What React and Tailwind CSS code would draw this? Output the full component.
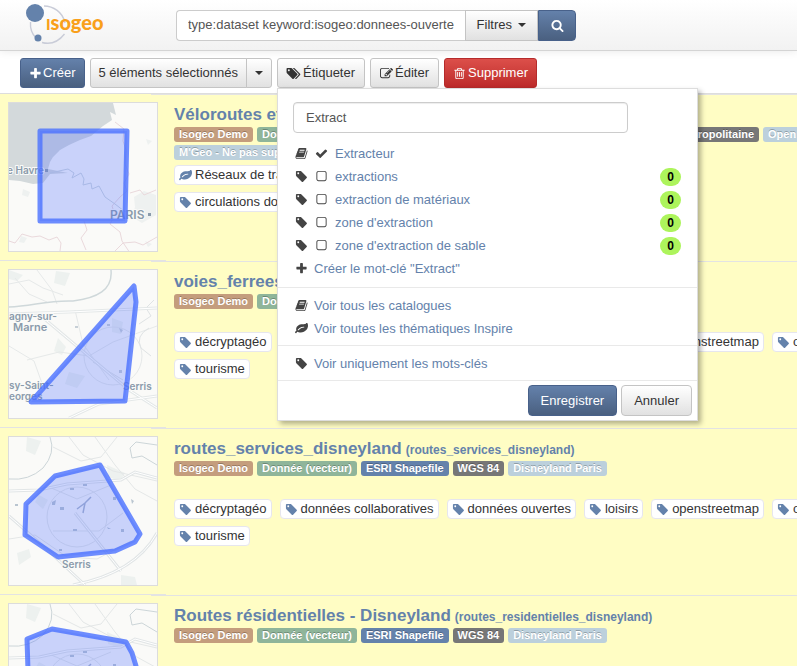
import React from "react";

const ICONS = {
  tag: "M576 448q0-53-37.5-90.5t-90.5-37.5-90.5 37.5-37.5 90.5 37.5 90.5 90.5 37.5 90.5-37.5 37.5-90.5zm1067 576q0 53-37 90l-491 492q-39 37-91 37-53 0-90-37l-715-716q-38-37-64.5-101t-26.5-117v-416q0-52 38-90t90-38h416q53 0 117 26.5t102 64.5l715 714q37 39 37 91z",
  tags: "M384 448q0-53-37.5-90.5t-90.5-37.5-90.5 37.5-37.5 90.5 37.5 90.5 90.5 37.5 90.5-37.5 37.5-90.5zm1067 576q0 53-37 90l-491 492q-39 37-91 37-53 0-90-37l-715-716q-38-37-64.5-101t-26.5-117v-416q0-52 38-90t90-38h416q53 0 117 26.5t102 64.5l715 714q37 39 37 91zm384 0q0 53-37 90l-491 492q-39 37-91 37-36 0-59-14t-53-45l470-470q37-37 37-90 0-52-37-91l-715-714q-38-38-102-64.5t-117-26.5h224q53 0 117 26.5t102 64.5l715 714q37 39 37 91z",
  plus: "M1600 736v192q0 40-28 68t-68 28h-416v416q0 40-28 68t-68 28h-192q-40 0-68-28t-28-68v-416h-416q-40 0-68-28t-28-68v-192q0-40 28-68t68-28h416v-416q0-40 28-68t68-28h192q40 0 68 28t28 68v416h416q40 0 68 28t28 68z",
  search: "M1216 832q0-185-131.5-316.5t-316.5-131.5-316.5 131.5-131.5 316.5 131.5 316.5 316.5 131.5 316.5-131.5 131.5-316.5zm512 832q0 52-38 90t-90 38q-54 0-90-38l-343-342q-179 124-399 124-143 0-273.5-55.5t-225-150-150-225-55.5-273.5 55.5-273.5 150-225 225-150 273.5-55.5 273.5 55.5 225 150 150 225 55.5 273.5q0 220-124 399l343 343q37 37 37 90z",
  check: "M1671 566q0 40-28 68l-724 724-136 136q-28 28-68 28t-68-28l-136-136-362-362q-28-28-28-68t28-68l136-136q28-28 68-28t68 28l294 295 656-657q28-28 68-28t68 28l136 136q28 28 28 68z",
  square: "M1312 256h-832q-66 0-113 47t-47 113v832q0 66 47 113t113 47h832q66 0 113-47t47-113v-832q0-66-47-113t-113-47zm288 160v832q0 119-84.5 203.5t-203.5 84.5h-832q-119 0-203.5-84.5t-84.5-203.5v-832q0-119 84.5-203.5t203.5-84.5h832q119 0 203.5 84.5t84.5 203.5z",
  leaf: "M1280 704q0-26-19-45t-45-19q-172 0-318 49.5t-259.5 134-235.5 219.5q-19 21-19 45 0 26 19 45t45 19q24 0 45-19 27-24 74-71t67-66q137-124 268.5-176t313.5-52q26 0 45-19t19-45zm512-198q0 95-20 193-46 224-184.5 383t-357.5 268q-214 108-438 108-148 0-286-47-15-5-88-42t-96-37q-16 0-39.5 32t-45 70-52.5 70-60 32q-43 0-63.5-17.5t-45.5-59.5q-2-4-6-11t-5.5-10-3-9.5-1.5-13.5q0-35 31-73.5t68-65.5 68-56 31-48q0-4-14-38t-16-44q-9-51-9-104 0-115 43.5-220t119-184.5 170.5-139 204-95.5q55-18 145-25.5t179.5-9 178.5-6 163.5-24 113.5-56.5l29.5-29.5 29.5-28 27-20 36.5-16 43.5-4.5q39 0 70.5 46t47.5 112 24 124 8 96z",
  book: "M1703 478q40 57 18 129l-275 906q-19 64-76.5 107.5t-122.5 43.5h-923q-77 0-148.5-53.5t-99.5-131.5q-24-67-2-127 0-4 3-27t4-37q1-8-3-21.5t-3-19.5q2-11 8-21t16.5-23.5 16.5-23.5q23-38 45-91.5t30-91.5q3-10 .5-30t-.5-28q3-11 17-28t17-23q21-36 42-92t25-90q1-9-2.500-32t.5-28q4-13 22-30.5t22-22.5q19-26 42.5-84.5t27.5-96.5q1-8-3-25.5t-2-26.5q2-8 9-18t18-23 17-21q8-12 16.500-30.500t15-35 16-36 19.500-32 26.500-23.500 36-11.500 47.500 5.500l-1 3q38-9 51-9h761q74 0 114 56t18 130l-274 906q-36 119-71.500 153.500t-128.500 34.500h-869q-27 0-38 15-11 16-1 43 24 70 144 70h923q29 0 56-15.500t35-41.500l300-987q7-22 5-57 38 15 59 43zm-1064 2q-4 13 2 22.500t20 9.500h608q13 0 25.500-9.500t16.500-22.500l21-64q4-13-2-22.500t-20-9.500h-608q-13 0-25.500 9.500t-16.500 22.500zm-83 256q-4 13 2 22.500t20 9.500h608q13 0 25.500-9.500t16.500-22.500l21-64q4-13-2-22.500t-20-9.500h-608q-13 0-25.500 9.500t-16.500 22.500z",
  trash: "M704 736v576q0 14-9 23t-23 9h-64q-14 0-23-9t-9-23v-576q0-14 9-23t23-9h64q14 0 23 9t9 23zm256 0v576q0 14-9 23t-23 9h-64q-14 0-23-9t-9-23v-576q0-14 9-23t23-9h64q14 0 23 9t9 23zm256 0v576q0 14-9 23t-23 9h-64q-14 0-23-9t-9-23v-576q0-14 9-23t23-9h64q14 0 23 9t9 23zm128 724v-948h-896v948q0 22 7 40.5t14.5 27 10.5 8.5h832q3 0 10.5-8.5t14.5-27 7-40.5zm-672-1076h448l-48-117q-7-9-17-11h-317q-10 2-17 11zm928 32v64q0 14-9 23t-23 9h-96v948q0 83-47 143.5t-113 60.5h-832q-66 0-113-58.5t-47-141.5v-952h-96q-14 0-23-9t-9-23v-64q0-14 9-23t23-9h309l70-167q15-37 54-63t79-26h320q40 0 79 26t54 63l70 167h309q14 0 23 9t9 23z",
  edit: "M888 1184l116-116-152-152-116 116v56h96v96h56zm440-720q-16-16-33 1l-350 350q-17 17-1 33t33-1l350-350q17-17 1-33zm80 594v190q0 119-84.5 203.5t-203.5 84.5h-832q-119 0-203.5-84.5t-84.5-203.5v-832q0-119 84.5-203.5t203.5-84.5h832q63 0 117 25 15 7 18 23 3 17-9 29l-49 49q-14 14-32 8-23-6-45-6h-832q-66 0-113 47t-47 113v832q0 66 47 113t113 47h832q66 0 113-47t47-113v-126q0-13 9-22l64-64q15-15 35-7t20 29zm-96-738l288 288-672 672h-288v-288zm444 132l-92 92-288-288 92-92q28-28 68-28t68 28l152 152q28 28 28 68t-28 68z",
};

function Icon({ name, className = "" }) {
  return (
    <svg viewBox="0 0 1792 1792" fill="currentColor" aria-hidden="true" className={`size-[13px] shrink-0 overflow-visible ${className}`}>
      <path d={ICONS[name]} />
    </svg>
  );
}

function Caret() {
  return <span className="border-x-4 border-t-4 border-x-transparent border-t-[#333]" />;
}

const grayBtn = "border border-[#c4c4c4] bg-linear-to-b from-white to-[#e1e1e1] text-[#333]";
const blueBtn = "border border-[#48618a] bg-linear-to-b from-[#6481ab] to-[#4a6080] text-white";
const redBtn = "border border-[#b52b2b] bg-linear-to-b from-[#dc4f4a] to-[#bd2a2a] text-white";

function Button({ tone = grayBtn, className = "", children, ...rest }) {
  return (
    <button type="button" className={`flex items-center whitespace-nowrap ${tone} ${className}`} {...rest}>
      {children}
    </button>
  );
}

function Logo() {
  return (
    <svg width="86" height="42" viewBox="0 0 86 42" role="img" aria-label="Isogeo">
      <g fill="none" stroke="#c9ccd8" strokeWidth="1.4">
        <path d="M18 2C27 2 37 8 39 19" />
        <path d="M4.500 18C4 25 6 30 10 34" />
        <path d="M16 38.500C25 41 33 37 38.500 30" />
      </g>
      <circle cx="9" cy="9" r="9" fill="#6482ab" />
      <circle cx="12" cy="34" r="3.500" fill="#6482ab" />
      <text x="20" y="26" fill="#f9a01b" fontFamily="Lato, sans-serif" fontWeight="900" fontSize="20">
        <tspan fontSize="15">I</tspan>sogeo
      </text>
    </svg>
  );
}

function Header() {
  return (
    <header className="flex h-[51px] items-center border-b border-[#d4d4d4] bg-linear-to-b from-white to-[#f2f2f2] shadow-[0_1px_8px_rgba(0,0,0,0.08)]">
      <a href="#accueil" className="ml-[26px] w-[150px]">
        <Logo />
      </a>
      <form className="flex h-[31px] w-[400px]" onSubmit={(e) => e.preventDefault()}>
        <input
          aria-label="Recherche"
          defaultValue="type:dataset keyword:isogeo:donnees-ouverte"
          className="min-w-0 flex-1 rounded-l border border-r-0 border-[#ccc] bg-white px-[11px] text-[#555] outline-none"
        />
        <Button className="gap-1.5 px-[11px]">
          Filtres
          <Caret />
        </Button>
        <Button tone={blueBtn} className="w-[38px] justify-center rounded-r" aria-label="Rechercher">
          <Icon name="search" />
        </Button>
      </form>
    </header>
  );
}

function Choice({ icon, label, checked = false, count }) {
  return (
    <li className="flex h-[23px] items-center pr-4">
      <label className="flex flex-1 items-center gap-[7px]">
        <Icon name={icon} />
        <input type="checkbox" defaultChecked={checked} className="peer sr-only" />
        <Icon name="check" className="hidden peer-checked:block" />
        <Icon name="square" className="peer-checked:hidden" />
        <span className="text-[#6482ab]">{label}</span>
      </label>
      {count !== undefined && (
        <span className="flex h-[18px] w-[21px] items-center justify-center rounded-full bg-[#adf45c] text-[12px] font-bold text-black">
          {count}
        </span>
      )}
    </li>
  );
}

function MenuLink({ icon, children }) {
  return (
    <li>
      <a href="#menu" className="flex h-[23px] items-center gap-[6px]">
        <Icon name={icon} />
        <span className="text-[#6482ab]">{children}</span>
      </a>
    </li>
  );
}

function TagMenu() {
  return (
    <div className="absolute top-full left-0 z-10 w-[421px] border border-[#ddd] bg-white text-[#444] shadow-[3px_3px_5px_rgba(0,0,0,0.3)]">
      <div className="px-[15px] pt-[13px] pb-[9px]">
        <input
          aria-label="Mot-clé"
          defaultValue="Extract"
          className="h-[31px] w-[335px] rounded border border-[#ccc] bg-white px-3 text-[#555] shadow-[inset_0_1px_1px_rgba(0,0,0,0.075)] outline-none"
        />
      </div>
      <ul className="pb-[7px] pl-[17px]">
        <Choice icon="book" label="Extracteur" checked />
        <Choice icon="tag" label="extractions" count={0} />
        <Choice icon="tag" label="extraction de matériaux" count={0} />
        <Choice icon="tag" label="zone d'extraction" count={0} />
        <Choice icon="tag" label="zone d'extraction de sable" count={0} />
        <MenuLink icon="plus">Créer le mot-clé "Extract"</MenuLink>
      </ul>
      <ul className="border-t border-[#e9e9e9] pt-[6px] pb-[5px] pl-[17px]">
        <MenuLink icon="book">Voir tous les catalogues</MenuLink>
        <MenuLink icon="leaf">Voir toutes les thématiques Inspire</MenuLink>
      </ul>
      <ul className="border-t border-[#e9e9e9] pt-[6px] pb-[5px] pl-[17px]">
        <MenuLink icon="tag">Voir uniquement les mots-clés</MenuLink>
      </ul>
      <div className="flex justify-end gap-1 border-t border-[#e9e9e9] px-[5px] py-1">
        <Button tone={blueBtn} className="h-[31px] rounded px-3">Enregistrer</Button>
        <Button className="h-[31px] rounded px-3">Annuler</Button>
      </div>
    </div>
  );
}

function Toolbar() {
  return (
    <div className="flex gap-[5px] px-5 pt-[7px] pb-[6px]">
      <Button tone={blueBtn} className="h-[30px] gap-px rounded-[3px] px-2">
        <Icon name="plus" />
        Créer
      </Button>
      <div className="flex h-[30px]">
        <Button className="rounded-l-[3px] px-2">5 éléments sélectionnés</Button>
        <Button className="-ml-px w-[26px] justify-center rounded-r-[3px]" aria-label="Plus d'actions">
          <Caret />
        </Button>
      </div>
      <div className="relative flex h-[30px]">
        <Button className="gap-[3px] rounded-[3px] px-[9px]" aria-expanded="true">
          <Icon name="tags" />
          Étiqueter
        </Button>
        <TagMenu />
      </div>
      <Button className="h-[30px] gap-[2px] rounded-[3px] px-[9px]">
        <Icon name="edit" />
        Éditer
      </Button>
      <Button tone={redBtn} className="h-[30px] gap-[2px] rounded-[3px] px-2">
        <Icon name="trash" />
        Supprimer
      </Button>
    </div>
  );
}

function MapFrame({ label, shape, children, places }) {
  return (
    <svg viewBox="0 0 148 148" role="img" aria-label={label} className="block size-[150px] border border-[#dcdcdc] bg-[#fafaf8]">
      {children}
      <g fontFamily="Inter, sans-serif" fontWeight="600" fill="#8a9bab" stroke="#fafaf8" strokeWidth="2" paintOrder="stroke">
        {places.map(([x, y, t, size = 10]) => (
          <text key={t} x={x} y={y} fontSize={size}>{t}</text>
        ))}
      </g>
      <polygon points={shape} fill="#4a6cff" fillOpacity="0.28" stroke="#4a70ff" strokeOpacity="0.8" strokeWidth="5" strokeLinejoin="round" />
    </svg>
  );
}

function NormandyMap() {
  return (
    <MapFrame label="Emprise Normandie" shape="31,28 118,28 116,118 31,118" places={[[-2, 71, "e Havre"], [101, 116, "PARIS", 12]]}>
      <path d="M0 0H104L107 12L101 9L103 17L94 23L82 33L71 37L60 42L51 47L44 54L41 59L39 66L59 70L41 71L34 80L24 81L11 78L0 77Z" fill="#d3d9db" />
      <path d="M125 94l10-6 12 4v20l-14 8-10-6 3-10zM14 86l7 3-2 5-6-2zM12 133l6 2-3 5-5-1zM137 36l6 2-4 4zM136 138l7 3-4 3z" fill="#eef1f0" />
      <g fill="none" stroke="#ead9dc" strokeWidth="1">
        <path d="M106 19l9 7-1 12 3 9-1 14 4 10-5 9 3 8-7 6-8 9 3 9-5 9 10 8 2 9 8 12 3 9-6 6 7 4" />
        <path d="M121 90l10-3 4 5 12-5M0 138l6 2 7-9 10 3 8-1 9 4 8-3 4 6-1 8M75 118l3 9-6 8 5 12M106 148l8-8 12-1 8 3 14-8" />
      </g>
      <path d="M41 70l18-4 6 4-2 5 9-5 3 6-1 6 8-2 1 6 7-3 6 11 10 7 9 7 8 2" fill="none" stroke="#ccd6dd" />
      <rect x="36" y="66" width="3" height="3" fill="#8a9bab" />
      <rect x="139" y="110" width="3" height="3" fill="#8a9bab" />
    </MapFrame>
  );
}

function RailMap() {
  return (
    <MapFrame label="Emprise Marne-la-Vallée" shape="125,16 127,32 116,131 22,132" places={[[0, 50, "agny-sur-"], [4, 61, "Marne", 11], [0, 119, "sy-Saint-"], [0, 130, "eorges"], [114, 120, "Serris"]]}>
      <path d="M47 1l14 2-5 13-11-3zM49 68l8 9-4 8-8-4zM103 48l11 4-2 12-9-2zM60 102l16 4-8 12-12-4zM0 0l14 5-6 6-8-2z" fill="#edf1ef" />
      <g fill="none" stroke="#e6e9e9">
        <path d="M0 14l20-4 14 8 20 7M6 8l14 16 18 8M28 0l15 20 5 14M18 90l32-8 30 4 24-14 44-16M0 76l25 15 10 28M66 40l8 34 26 36" />
        <circle cx="104" cy="86" r="29" />
        <path d="M84 92l30 18M130 54l12-8-5-8 8-8M140 58q-14 8-8 20l10 8" stroke="#dfe3e4" />
      </g>
      <path d="M0 44l60-2 88-4M32 46l88 74 28 18M60 148l30-14 58-8" fill="none" stroke="#e4e8e8" strokeWidth="3" />
      <path d="M0 44l60-2 88-4M32 46l88 74 28 18M60 148l30-14 58-8" fill="none" stroke="#fff" />
      <path d="M0 37C24 36 38 30 64 31C88 28 104 20 102 0" fill="none" stroke="#cfd8da" strokeWidth="1.500" />
      <path d="M66 56h3v2h-3zM98 54h3v2h-3zM110 58l4 2-2 3zM110 100h3v3h-3z" fill="#c6cfd6" />
    </MapFrame>
  );
}

function DisneyRoads() {
  return (
    <>
      <path d="M18 0l14 4-6 14-9-4zM30 58l9 5-5 9-8-7zM98 28l18 8-5 8-12-4zM8 116l12-4 2 8-12 8zM112 138l14 2 2 8h-16z" fill="#edf1ef" />
      <g fill="none" stroke="#e4e7e7">
        <path d="M44 10l28 14 20-4 16-20M60 0l14 18 30 16 44 10M0 102l26-4 32 22 30 2 34-18M86 0l20 28 20 24 22 12" />
        <circle cx="68" cy="80" r="30" />
        <path d="M44 94h46l24-18M40 50l28 12 34-14" />
      </g>
      <path d="M0 54l30-1 28-6 54-4 14-8 22 6M0 79l32 28 44 41M66 76l46 58M148 96q-22 40-84 52" fill="none" stroke="#e1e5e6" strokeWidth="3" />
      <path d="M0 54l30-1 28-6 54-4 14-8 22 6M0 79l32 28 44 41M66 76l46 58M148 96q-22 40-84 52" fill="none" stroke="#fff" />
      <path d="M0 42q20 2 34-11 13-15 7-31M148 28l-15-9-10 2-2-10 6-6 21 3" fill="none" stroke="#ccd5d8" />
      <path d="M68 72l8-6 6-6M76 66l-2 10" fill="none" stroke="#a9b6cc" strokeWidth="1.500" />
      <path d="M61 51h4v2h-4zM74 47h4v2h-4zM43 65l4-2-1 5h-3zM51 70h4v3h-4zM104 60h3v3h-3zM64 92h4v2h-4zM98 90l4 2h-3zM112 92h3v3h-3zM50 112h3v2h-3zM122 62l3 2-2 3zM6 67h3v2h-3z" fill="#b9c5d0" />
    </>
  );
}

function ServicesMap() {
  return (
    <MapFrame label="Emprise Disneyland" shape="91,28 131,97 126,105 106,114 49,120 16,98 17,67 46,39" places={[[53, 131, "Serris"]]}>
      <DisneyRoads />
    </MapFrame>
  );
}

function ResidentialMap() {
  return (
    <MapFrame label="Emprise résidentielle Disneyland" shape="43,25 18,35 20,98 49,120 106,114 131,97 127,62 123,49 117,38" places={[[53, 131, "Serris"]]}>
      <DisneyRoads />
    </MapFrame>
  );
}

const TONES = {
  owner: "bg-[#c49d7d]",
  type: "bg-[#8fb59a]",
  format: "bg-[#6482ab]",
  crs: "bg-[#777]",
  catalog: "bg-[#bcd0dc]",
};

const demo = ["owner", "Isogeo Demo"];
const vector = ["type", "Donnée (vecteur)"];
const shapefile = ["format", "ESRI Shapefile"];
const wgs = ["crs", "WGS 84"];
const disney = ["catalog", "Disneyland Paris"];
const osmKeywords = [
  [["tag", "décryptagéo"], ["tag", "données collaboratives"], ["tag", "données ouvertes"], ["tag", "loisirs"], ["tag", "openstreetmap"], ["tag", "osm"]],
  [["tag", "tourisme"]],
];

const DATASETS = [
  {
    title: "Véloroutes et voies vertes",
    name: "veloroutes_voies_vertes",
    Map: NormandyMap,
    labels: [
      [demo, vector, shapefile, ["crs", "RGF93 / Lambert-93 (epsg:2154) -- France métropolitaine"], ["catalog", "Open Data"]],
      [["catalog", "M'Geo - Ne pas supprimer"]],
    ],
    keywords: [[["leaf", "Réseaux de transport"]], [["tag", "circulations douces"]]],
  },
  { title: "voies_ferrees_disneyland", name: "voies_ferrees", Map: RailMap, labels: [[demo, vector, shapefile, wgs]], keywords: osmKeywords },
  { title: "routes_services_disneyland", name: "routes_services_disneyland", Map: ServicesMap, labels: [[demo, vector, shapefile, wgs, disney]], keywords: osmKeywords },
  { title: "Routes résidentielles - Disneyland", name: "routes_residentielles_disneyland", Map: ResidentialMap, labels: [[demo, vector, shapefile, wgs, disney]], keywords: osmKeywords },
];

function Dataset({ title, name, Map, labels, keywords }) {
  return (
    <li className="flex h-[167px] bg-[#fffdc4]">
      <div className="w-[166px] shrink-0 border-b border-[#e3e3e3] pt-2 pl-2">
        <Map />
      </div>
      <div className="-ml-[15px] min-w-0 flex-1 overflow-hidden border-t border-[#e3e3e3] pt-[9px] pl-[23px] whitespace-nowrap">
        <h2 className="flex h-[22px] items-baseline gap-1 font-bold text-[#6482ab]">
          <a href="#fiche" className="text-[17px] leading-[22px]">{title}</a>
          <small className="text-[12px]">({name})</small>
        </h2>
        <div className="flex h-[39px] flex-col gap-[3px] pt-px">
          {labels.map((line, i) => (
            <div key={i} className="flex gap-1">
              {line.map(([tone, text]) => (
                <span key={text} className={`h-[15px] shrink-0 rounded-[3px] px-[5px] text-[11px] leading-[15px] font-bold text-white [text-shadow:0_-1px_0_rgba(0,0,0,0.25)] ${TONES[tone]}`}>
                  {text}
                </span>
              ))}
            </div>
          ))}
        </div>
        <div className="flex flex-col gap-[7px]">
          {keywords.map((line, i) => (
            <ul key={i} className="flex gap-2">
              {line.map(([icon, text]) => (
                <li key={text} className="flex h-5 shrink-0 items-center gap-[3px] rounded border border-[#e6e6ee] bg-white px-1 text-[#333]">
                  <Icon name={icon} className="text-[#6482ab]" />
                  {text}
                </li>
              ))}
            </ul>
          ))}
        </div>
      </div>
    </li>
  );
}

export default function App() {
  return (
    <div className="h-screen overflow-hidden bg-white font-['Liberation_Sans',Arial,sans-serif] text-[13px] leading-[18px] text-[#333]">
      <Header />
      <Toolbar />
      <ul className="-mt-px border-t border-[#ddd]">
        {DATASETS.map((d) => (
          <Dataset key={d.title} {...d} />
        ))}
      </ul>
    </div>
  );
}
